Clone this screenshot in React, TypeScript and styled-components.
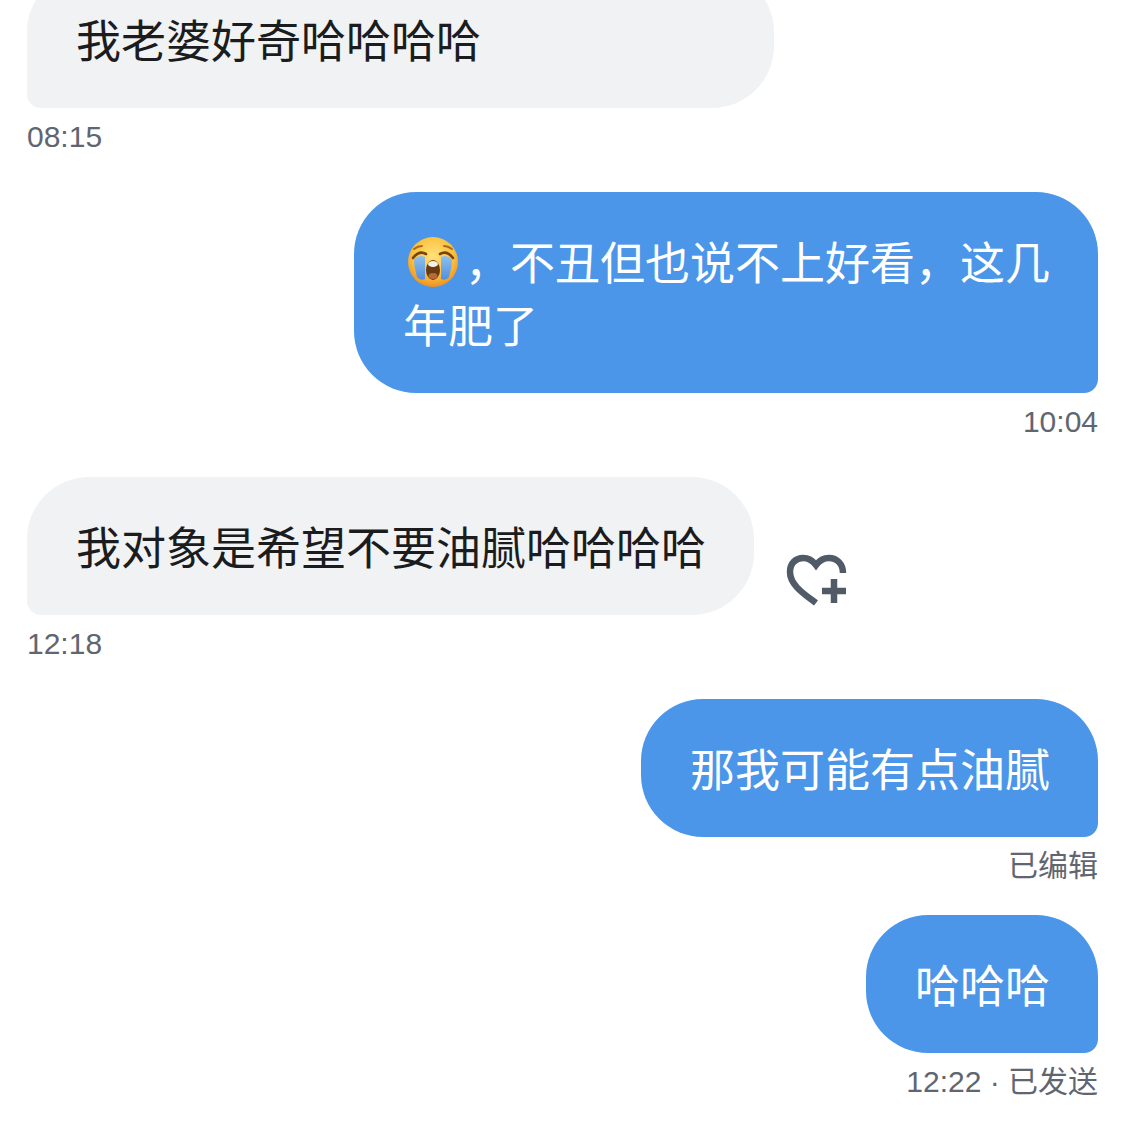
import React from "react";
import styled, { createGlobalStyle } from "styled-components";

const Global = createGlobalStyle`
  html, body { margin: 0; padding: 0; background: #fff; overflow: hidden; }
  body { width: 1125px; height: 1125px; font-family: "Liberation Sans", "Noto Sans CJK SC", sans-serif; }
`;

const Thread = styled.main`
  display: flex;
  flex-direction: column;
  margin-top: -30px;
  padding: 0 27px;
`;

const Group = styled.section<{ $side: "left" | "right"; $after?: number }>`
  display: flex;
  flex-direction: column;
  align-items: ${(p) => (p.$side === "right" ? "flex-end" : "flex-start")};
  margin-bottom: ${(p) => p.$after ?? 34}px;
`;

const BubbleRow = styled.div`
  display: flex;
  align-items: flex-end;
  gap: 30px;
`;

const Bubble = styled.div<{ $side: "left" | "right"; $width?: number }>`
  box-sizing: border-box;
  width: ${(p) => (p.$width ? `${p.$width}px` : "auto")};
  padding: 37px 48px 38px 49px;
  font-family: "Noto Sans CJK SC", "Liberation Sans", sans-serif;
  font-size: 45px;
  line-height: 63px;
  white-space: nowrap;
  color: ${(p) => (p.$side === "right" ? "#ffffff" : "#1b1c1e")};
  background: ${(p) => (p.$side === "right" ? "#4b96e8" : "#f0f2f4")};
  border-radius: ${(p) => (p.$side === "right" ? "62px 62px 14px 62px" : "62px 62px 62px 14px")};
`;

const Meta = styled.div`
  margin-top: 8px;
  height: 42px;
  line-height: 42px;
  font-size: 30px;
  color: #5f6670;
  white-space: nowrap;
`;

const Emoji = styled.svg`
  display: inline-block;
  width: 52px;
  height: 52px;
  margin: 0 6px 0 4px;
  vertical-align: -8px;
`;

const HeartIcon = styled.svg`
  display: block;
  width: 66px;
  height: 60px;
  margin-bottom: 6px;
  flex: none;
`;

const CryingFace = () => (
  <Emoji viewBox="0 0 52 52" aria-hidden="true">
    <defs>
      <radialGradient id="face" cx="50%" cy="38%" r="62%">
        <stop offset="0%" stopColor="#ffe27a" />
        <stop offset="65%" stopColor="#fbc13f" />
        <stop offset="100%" stopColor="#ee8f22" />
      </radialGradient>
      <linearGradient id="tear" x1="0" y1="0" x2="0" y2="1">
        <stop offset="0%" stopColor="#8fc0ee" />
        <stop offset="100%" stopColor="#4f8fdc" />
      </linearGradient>
    </defs>
    <circle cx="26" cy="26" r="25" fill="url(#face)" />
    <path d="M7 24q5-6 11-3v22q-5 2-8-2-3-9-3-17z" fill="url(#tear)" />
    <path d="M45 24q-5-6-11-3v22q5 2 8-2 3-9 3-17z" fill="url(#tear)" />
    <path d="M6 22q6-8 13-4" stroke="#7a4310" strokeWidth="2.6" fill="none" strokeLinecap="round" />
    <path d="M46 22q-6-8-13-4" stroke="#7a4310" strokeWidth="2.6" fill="none" strokeLinecap="round" />
    <path d="M7 13q4-3 8-3" stroke="#a9691a" strokeWidth="2" fill="none" strokeLinecap="round" />
    <path d="M45 13q-4-3-8-3" stroke="#a9691a" strokeWidth="2" fill="none" strokeLinecap="round" />
    <ellipse cx="26" cy="34" rx="7" ry="10" fill="#6a3a12" />
    <ellipse cx="26" cy="28" rx="5" ry="3" fill="#f5f1e8" />
    <ellipse cx="26" cy="40" rx="4.5" ry="3" fill="#b56a3a" />
  </Emoji>
);

const HeartAdd = () => (
  <HeartIcon viewBox="0 0 66 60" aria-hidden="true" fill="none" stroke="#515b68">
    <path
      d="M32 54C20 45 6 36 6 23C6 14 12 9 19 9C25 9 29 12 32 16C35 12 39 9 45 9C53 9 59 15 59 24"
      strokeWidth="6.5"
    />
    <path d="M38 42H62M50 30V54" strokeWidth="6.5" />
  </HeartIcon>
);

export default function App() {
  return (
    <>
      <Global />
      <Thread>
        <Group $side="left">
          <Bubble $side="left" $width={747}>我老婆好奇哈哈哈哈</Bubble>
          <Meta>08:15</Meta>
        </Group>
        <Group $side="right">
          <Bubble $side="right">
            <CryingFace />，不丑但也说不上好看，这几
            <br />
            年肥了
          </Bubble>
          <Meta>10:04</Meta>
        </Group>
        <Group $side="left">
          <BubbleRow>
            <Bubble $side="left">我对象是希望不要油腻哈哈哈哈</Bubble>
            <HeartAdd />
          </BubbleRow>
          <Meta>12:18</Meta>
        </Group>
        <Group $side="right" $after={28}>
          <Bubble $side="right">那我可能有点油腻</Bubble>
          <Meta>已编辑</Meta>
        </Group>
        <Group $side="right">
          <Bubble $side="right">哈哈哈</Bubble>
          <Meta>12:22 · 已发送</Meta>
        </Group>
      </Thread>
    </>
  );
}
